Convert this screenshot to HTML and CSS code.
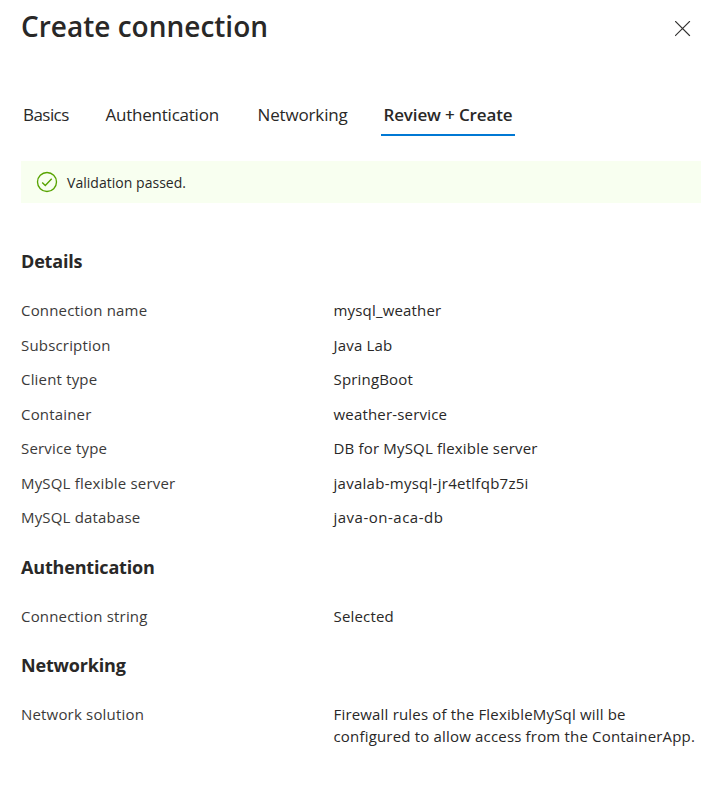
FILE: index.html
```html
<!DOCTYPE html>
<html lang="en">
<head>
<meta charset="utf-8">
<title>Create connection</title>
<link rel="stylesheet" href="styles.css">
</head>
<body>
<main class="panel">
<header class="header"><h1>Create connection</h1>
<button class="close" aria-label="Close"><svg width="16" height="16" viewBox="0 0 16 16"><path d="M.5.5l14 14M14.5.5l-14 14"/></svg></button></header>
<nav class="tabs"><a class="basics">Basics</a><a>Authentication</a><a class="networking">Networking</a><a class="active">Review + Create</a></nav>
<div class="banner"><svg width="22" height="22" viewBox="0 0 22 22"><circle cx="11" cy="11" r="9.5"/><path d="M6.2 11.4l3.1 3.1 6.4-6.8"/></svg><span>Validation passed.</span></div>
<section class="details"><h2>Details</h2>
<dl><dt>Connection name</dt><dd>mysql_weather</dd>
<dt>Subscription</dt><dd>Java Lab</dd>
<dt>Client type</dt><dd>SpringBoot</dd>
<dt>Container</dt><dd>weather-service</dd>
<dt>Service type</dt><dd>DB for MySQL flexible server</dd>
<dt>MySQL flexible server</dt><dd class="server-name">javalab-mysql-jr4etlfqb7z5i</dd>
<dt>MySQL database</dt><dd class="database-name">java-on-aca-db</dd></dl></section>
<section><h2>Authentication</h2><dl><dt>Connection string</dt><dd>Selected</dd></dl></section>
<section><h2>Networking</h2><dl><dt>Network solution</dt><dd>Firewall rules of the FlexibleMySql will be<br>configured to allow access from the ContainerApp.</dd></dl></section>
</main>
</body>
</html>
```
FILE: styles.css
```css
* { box-sizing: border-box; }
body { margin: 0; background: #fff; color: #292827; font-family: "Open Sans", "Noto Sans", sans-serif; font-size: 15px; }
.panel { width: 721px; height: 812px; padding: 7px 20px 0 21px; overflow: hidden; }
.header { display: flex; justify-content: space-between; height: 91px; }
h1 { margin: 0; font-size: 28px; line-height: 39px; font-weight: 600; white-space: nowrap; }
.close { width: 16px; height: 16px; margin: 14px 10px 0 0; padding: 0; border: 0; background: none; }
svg { display: block; fill: none; }
.close svg { stroke: #323130; stroke-width: 1.1; stroke-linecap: square; }
.tabs { display: grid; grid-template-columns: 82.5px 152px 125.5px 134px; height: 38px; font-size: 17px; line-height: 33px; letter-spacing: -.23px; white-space: nowrap; }
.tabs a { padding: 0 2px; }
.tabs .basics { letter-spacing: -.55px; }
.tabs .networking { letter-spacing: -.15px; }
.tabs .active { font-weight: 600; letter-spacing: -.14px; padding-left: 2.5px; border-bottom: 2px solid #0078d4; }
.banner { display: flex; align-items: center; gap: 9px; height: 42px; margin-top: 25px; padding-left: 15px; background: #f8fff0; font-size: 14px; letter-spacing: .03px; }
.banner svg { stroke: #57a300; stroke-width: 1.35; }
.details { margin-top: 43px; }
h2 { margin: 0; font-size: 18px; font-weight: 700; line-height: 30px; letter-spacing: -.17px; }
dl { display: grid; grid-template-columns: 312.5px 1fr; row-gap: 12.5px; margin: 23px 0; line-height: 22px; letter-spacing: .18px; }
.details dl { margin-bottom: 24px; }
dt, dd { margin: 0; white-space: nowrap; }
dt { color: #3b3a39; }
.server-name { letter-spacing: .27px; }
.database-name { letter-spacing: .5px; }
```
